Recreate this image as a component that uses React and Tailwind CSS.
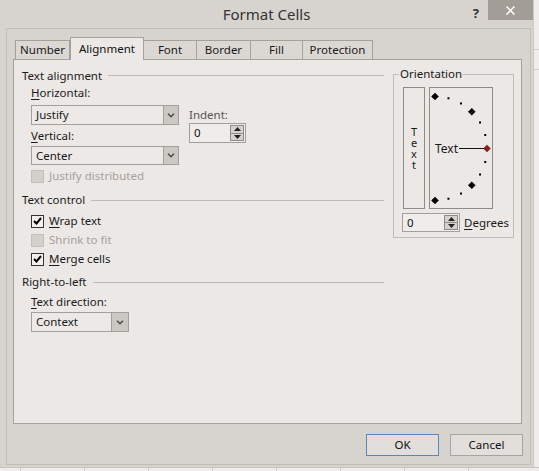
import React from "react";

const FONT = "font-['Noto_Sans','Open_Sans',sans-serif]";

function Chevron() {
  return (
    <svg width="8" height="5" viewBox="0 0 8 5">
      <polyline points="1,0.8 4,3.8 7,0.8" fill="none" stroke="#4a4a4a" strokeWidth="1.5" />
    </svg>
  );
}

function Select({ value, className, arrow = "w-[15px]" }) {
  return (
    <div className={`flex border border-[#a39f9b] bg-[#ece9e6] ${className}`}>
      <div className="flex-1 flex items-center pl-[4px] text-[#1a1a1a]">{value}</div>
      <div className={`${arrow} flex items-center justify-center bg-[#cbc7c3] border-l border-[#a39f9b]`}>
        <Chevron />
      </div>
    </div>
  );
}

function Tri({ up }) {
  return (
    <svg width="7" height="4" viewBox="0 0 7 4">
      <polygon points={up ? "0,4 3.5,0 7,4" : "0,0 3.5,4 7,0"} fill="#222" />
    </svg>
  );
}

function Spinner({ value, className }) {
  return (
    <div className={`flex border border-[#a39f9b] bg-[#efedeb] ${className}`}>
      <div className="flex-1 flex items-center pl-[4px] text-[#111]">{value}</div>
      <div className="w-[14px] my-[1px] mr-[1px] flex flex-col border border-[#8f8b87] bg-[#d5d1cd]">
        <div className="flex-1 flex items-center justify-center border-b border-[#8f8b87]">
          <Tri up />
        </div>
        <div className="flex-1 flex items-center justify-center">
          <Tri />
        </div>
      </div>
    </div>
  );
}

function Check({ checked, disabled, children }) {
  return (
    <div className="h-[14px] pl-[9px] flex items-center gap-[5px]">
      <div
        className={`w-[13px] h-[13px] flex items-center justify-center border ${
          disabled ? "border-[#c3bfbb] bg-[#d3cfcb]" : "border-[#333] bg-[#f4f2f0]"
        }`}
      >
        {checked && (
          <svg width="9" height="8" viewBox="0 0 9 8">
            <polyline points="1,4 3.5,6.5 8,1" fill="none" stroke="#000" strokeWidth="2" />
          </svg>
        )}
      </div>
      <span className={disabled ? "text-[#a5a19d]" : "text-[#1a1a1a]"}>{children}</span>
    </div>
  );
}

function Header({ children, className = "" }) {
  return (
    <div className={`h-[16px] flex items-center gap-[6px] ${className}`}>
      <span className="text-[#1a1a1a]">{children}</span>
      <div className="flex-1 h-px bg-[#bdb9b5]" />
    </div>
  );
}

function U({ children }) {
  return <span className="underline underline-offset-2">{children}</span>;
}

function Dial() {
  const cx = 5;
  const cy = 60.5;
  const r = 52;
  const pts = [];
  for (let a = -90; a <= 90; a += 15) {
    const t = (a * Math.PI) / 180;
    pts.push({ a, x: cx + r * Math.cos(t), y: cy - r * Math.sin(t) });
  }
  return (
    <svg width="62" height="120" viewBox="0 0 62 120">
      {pts.map((p) =>
        p.a % 45 === 0 ? (
          <polygon
            key={p.a}
            points={`${p.x},${p.y - 3.8} ${p.x + 3.8},${p.y} ${p.x},${p.y + 3.8} ${p.x - 3.8},${p.y}`}
            fill={p.a === 0 ? "#8b1e1e" : "#000"}
          />
        ) : (
          <rect key={p.a} x={p.x - 1} y={p.y - 1} width="2" height="2" fill="#000" />
        )
      )}
      <line x1="29" y1={cy} x2="54" y2={cy} stroke="#111" strokeWidth="1" />
      <text x="5" y="65" fontSize="12" fill="#1a1a1a" fontFamily="Noto Sans, sans-serif">
        Text
      </text>
    </svg>
  );
}

const tabs = [
  { name: "Number", w: "w-[55px]" },
  { name: "Alignment", w: "w-[74px]", active: true },
  { name: "Font", w: "w-[53px]" },
  { name: "Border", w: "w-[54px]" },
  { name: "Fill", w: "w-[52px]" },
  { name: "Protection", w: "w-[70px]" },
];

export default function App() {
  return (
    <div className={`w-[539px] h-[471px] overflow-hidden bg-[#eeedec] text-[11.5px] ${FONT} flex flex-col`}>
      <div className="flex h-[467px]">
        {/* dialog window */}
        <div className="w-[533px] h-full bg-[#d7d3cf] flex flex-col">
          {/* title bar */}
          <div className="h-[28px] grid grid-cols-[1fr_auto_1fr]">
            <div />
            <div className="flex items-center text-[15px] text-[#333] pt-[1px]">Format Cells</div>
            <div className="flex justify-end items-start">
              <span className="mt-[4px] mr-[9px] text-[13px] font-bold text-[#333]">?</span>
              <div className="w-[45px] h-[20px] bg-[#a39d98] flex items-center justify-center">
                <svg width="9" height="9" viewBox="0 0 9 9">
                  <path d="M0.5 0.5 L8.5 8.5 M8.5 0.5 L0.5 8.5" stroke="#fff" strokeWidth="1.5" />
                </svg>
              </div>
            </div>
          </div>

          {/* client area */}
          <div className="ml-[6px] w-[525px] h-[437px] border border-[#c2beba] flex flex-col">
            {/* tabs */}
            <div className="mt-[8px] h-[22px] pl-[8px] flex items-end">
              {tabs.map((t) =>
                t.active ? (
                  <div
                    key={t.name}
                    className={`${t.w} h-[23px] -mb-px z-10 relative bg-[#ebe8e5] border border-b-0 border-[#a4a09c] flex items-start justify-center pt-[2px] text-[#111]`}
                  >
                    {t.name}
                  </div>
                ) : (
                  <div
                    key={t.name}
                    className={`${t.w} h-[19px] bg-[#dbd7d3] border border-b-0 border-l-0 first:border-l border-[#a4a09c] flex items-center justify-center text-[#1a1a1a]`}
                  >
                    {t.name}
                  </div>
                )
              )}
            </div>

            {/* tab panel */}
            <div className="ml-[6px] w-[509px] h-[365px] border border-[#a4a09c] bg-[#ebe8e5] flex items-start">
              {/* left column */}
              <div className="w-[379px] pl-[8px] pr-[9px] pt-[7px] flex flex-col">
                <Header className="h-[17px]">Text alignment</Header>
                <div className="pl-[9px] flex">
                  <div className="w-[148px] flex flex-col">
                    <div className="h-[18px] flex items-center text-[#1a1a1a]">
                      <span><U>H</U>orizontal:</span>
                    </div>
                    <Select value="Justify" className="mt-[3px] h-[20px]" />
                    <div className="h-[21px] flex items-center text-[#1a1a1a]">
                      <span><U>V</U>ertical:</span>
                    </div>
                    <Select value="Center" className="h-[19px]" />
                  </div>
                  <div className="ml-[10px] mt-[23px] flex flex-col">
                    <div className="h-[16px] flex items-center text-[#555]">Indent:</div>
                    <Spinner value="0" className="w-[57px] h-[20px]" />
                  </div>
                </div>
                <div className="mt-[4px]">
                  <Check disabled>Justify distributed</Check>
                </div>

                <Header className="mt-[9px]">Text control</Header>
                <div className="mt-[6px]">
                  <Check checked>
                    <U>W</U>rap text
                  </Check>
                </div>
                <div className="mt-[5px]">
                  <Check disabled>Shrink to fit</Check>
                </div>
                <div className="mt-[5px]">
                  <Check checked>
                    <U>M</U>erge cells
                  </Check>
                </div>

                <Header className="mt-[8px]">Right-to-left</Header>
                <div className="pl-[9px] mt-[4px] h-[16px] flex items-center text-[#1a1a1a]">
                  <span><U>T</U>ext direction:</span>
                </div>
                <div className="pl-[9px] mt-[2px]">
                  <Select value="Context" className="w-[98px] h-[20px]" arrow="w-[17px]" />
                </div>
              </div>

              {/* orientation */}
              <fieldset className="mt-[6px] w-[121px] border border-[#c0bcb8] pb-[5px]">
                <legend className="ml-[5px] px-[1px] h-[16px] leading-[16px] text-[#1a1a1a]">Orientation</legend>
                <div className="mt-[5px] pl-[9px] flex gap-[4px]">
                  <div className="w-[22px] h-[122px] border border-[#8f8b87] flex flex-col items-center justify-center text-[11px] leading-[11px] text-[#1a1a1a]">
                    <span className="block h-[11px]">T</span>
                    <span className="block h-[11px]">e</span>
                    <span className="block h-[11px]">x</span>
                    <span className="block h-[11px]">t</span>
                  </div>
                  <div className="w-[64px] h-[122px] border border-[#8f8b87]">
                    <Dial />
                  </div>
                </div>
                <div className="mt-[4px] pl-[8px] flex items-center gap-[4px]">
                  <Spinner value="0" className="w-[58px] h-[19px]" />
                  <span className="text-[#1a1a1a]">
                    <U>D</U>egrees
                  </span>
                </div>
              </fieldset>
            </div>

            {/* buttons */}
            <div className="mt-[10px] mr-[7px] flex justify-end gap-[11px]">
              <button className="w-[73px] h-[22px] border border-[#5a87b6] bg-[#e1dedb] text-[#111]">OK</button>
              <button className="w-[73px] h-[22px] border border-[#a8a4a0] bg-[#e1dedb] text-[#111]">Cancel</button>
            </div>
          </div>
        </div>
        {/* sheet behind, right */}
        <div className="flex-1 flex flex-col border-l border-[#c8c8c8]">
          <div className="h-[50px] border-b border-[#d0d0d0]" />
          <div className="h-[20px] border-b border-[#d0d0d0]" />
        </div>
      </div>
      {/* sheet behind, bottom */}
      <div className="flex-1 flex border-t border-[#c4c4c4] pl-[20px]">
        {[0, 1, 2, 3, 4, 5, 6, 7].map((i) => (
          <div key={i} className="w-[64px] border-l border-[#cfcfcf]" />
        ))}
      </div>
    </div>
  );
}
